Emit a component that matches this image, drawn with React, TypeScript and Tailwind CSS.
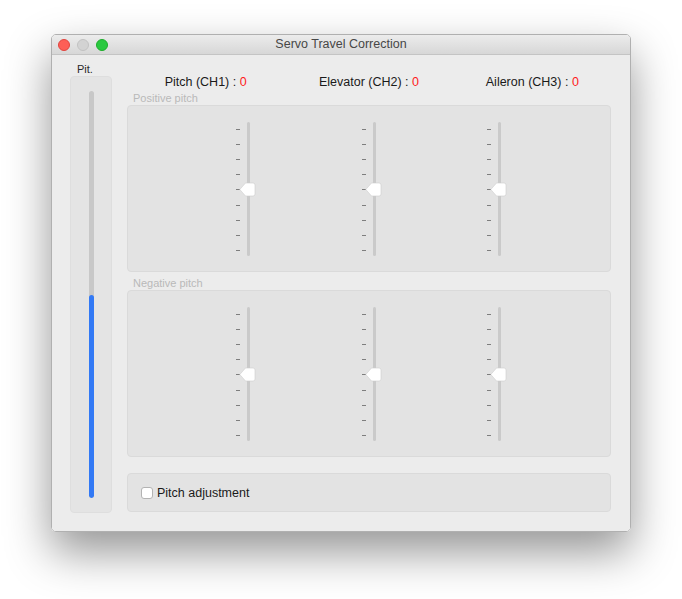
const font = { fontFamily: '"Liberation Sans", Arial, sans-serif' };

const TICKS = [0, 1, 2, 3, 4, 5, 6, 7, 8];

function VSlider() {
  return (
    <div className="relative w-[24px] h-[134px]">
      {TICKS.map((t) => (
        <div
          key={t}
          className="absolute left-[3px] w-[4px] h-px bg-[#7e7e7e]"
          style={{ top: 7 + t * 15.1 }}
        />
      ))}
      <div className="absolute left-[14px] top-0 bottom-0 w-[3px] rounded-full bg-[#cacaca]" />
      <svg className="absolute left-[6px] top-[60px]" width="17" height="15" viewBox="0 0 17 15">
        <path
          d="M0.8 7.5 L6.5 1 H14 a2 2 0 0 1 2 2 V12 a2 2 0 0 1 -2 2 H6.5 Z"
          fill="#ffffff"
          stroke="#cfcfcf"
          strokeWidth="0.6"
        />
      </svg>
    </div>
  );
}

function SliderGroup() {
  return (
    <div className="h-[167px] rounded-[4px] border border-[#dadada] bg-[#e3e3e3] pl-[105px] pt-[16px]">
      <div className="flex gap-[101.5px]">
        <VSlider />
        <VSlider />
        <VSlider />
      </div>
    </div>
  );
}

export default function App() {
  return (
    <div className="w-[682px] h-[599px] bg-white pl-[51px] pt-[34px]" style={font}>
      <div className="w-[580px] h-[498px] flex flex-col rounded-[5px] border border-[#b0b0b0] overflow-hidden shadow-[0_20px_45px_rgba(0,0,0,0.42)]">
        {/* title bar */}
        <div className="h-[20px] grid grid-cols-[1fr_auto_1fr] items-center border-b border-[#c4c4c4] bg-gradient-to-b from-[#ececec] to-[#d7d7d7] px-[6px]">
          <div className="flex gap-[7px]">
            <span className="w-[12px] h-[12px] rounded-full bg-[#fd5f57] border border-[#e0443e]" />
            <span className="w-[12px] h-[12px] rounded-full bg-[#d3d3d3] border border-[#c2c2c2]" />
            <span className="w-[12px] h-[12px] rounded-full bg-[#2ac940] border border-[#1dad2b]" />
          </div>
          <div className="text-[12.5px] text-[#474747] leading-none">Servo Travel Correction</div>
          <div />
        </div>

        {/* body */}
        <div className="flex-1 flex bg-[#ececec] pl-[18px] pr-[19px] pb-[18px] gap-[15px]">
          {/* left pitch meter */}
          <div className="w-[42px] flex flex-col pt-[8px]">
            <div className="h-[13px] leading-[13px] text-[11px] text-[#2a2a2a] pl-[7px]">Pit.</div>
            <div className="flex-1 flex justify-center rounded-[4px] border border-[#dedede] bg-[#e4e4e4] py-[14px]">
              <div className="w-[5px] rounded-full bg-[#c8c8c8] flex flex-col overflow-hidden">
                <div className="flex-1" />
                <div className="h-[50%] bg-[#3279f5] rounded-full" />
              </div>
            </div>
          </div>

          {/* right side */}
          <div className="flex-1 flex flex-col pt-[20px]">
            <div className="grid grid-cols-3 h-[15px] leading-[15px] text-[12.5px] text-[#1a1a1a] text-center">
              <div className="pr-[4px]">
                Pitch (CH1) : <span className="text-[#ff1a1a]">0</span>
              </div>
              <div>
                Elevator (CH2) : <span className="text-[#ff1a1a]">0</span>
              </div>
              <div className="pl-[4px]">
                Aileron (CH3) : <span className="text-[#ff1a1a]">0</span>
              </div>
            </div>

            <div className="mt-[2px] h-[13px] leading-[13px] text-[11px] text-[#b9b9b9] pl-[6px]">Positive pitch</div>
            <SliderGroup />

            <div className="mt-[5px] h-[13px] leading-[13px] text-[11px] text-[#b9b9b9] pl-[6px]">Negative pitch</div>
            <SliderGroup />

            <div className="mt-[16px] h-[39px] flex items-center gap-[4px] rounded-[4px] border border-[#dadada] bg-[#e3e3e3] pl-[13px]">
              <span className="w-[12px] h-[12px] mt-[1px] rounded-[3px] border border-[#b3b3b3] bg-white" />
              <span className="text-[12.5px] text-[#1a1a1a] pt-[2px]">Pitch adjustment</span>
            </div>
          </div>
        </div>
      </div>
    </div>
  );
}
